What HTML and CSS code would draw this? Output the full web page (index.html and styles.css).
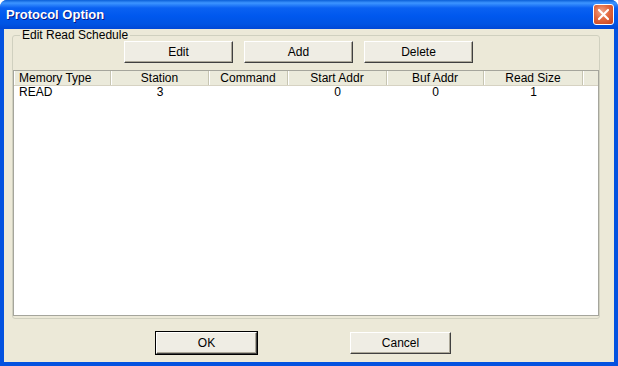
FILE: index.html
```html
<!DOCTYPE html>
<html lang="en">
<head>
  <meta charset="UTF-8" />
  <title>Protocol Option</title>
  <link rel="stylesheet" href="styles.css">
</head>
<body>

  <div class="window">
    <div class="titlebar">
      <span class="title">Protocol Option</span>
      <button class="close" title="Close">
        <svg width="13" height="13" viewBox="0 0 13 13">
          <path d="M2 2 L11 11 M11 2 L2 11" stroke="#fff" stroke-width="2.2" stroke-linecap="round" />
        </svg>
      </button>
    </div>

    <div class="client">
      <fieldset class="group">
        <legend>Edit Read Schedule</legend>
        <div class="toolbar">
          <button class="btn">Edit</button>
          <button class="btn">Add</button>
          <button class="btn">Delete</button>
        </div>

        <div class="list">
          <div class="list-head">
            <div class="col left">Memory Type</div>
            <div class="col">Station</div>
            <div class="col">Command</div>
            <div class="col">Start Addr</div>
            <div class="col">Buf Addr</div>
            <div class="col">Read Size</div>
            <div class="col filler"></div>
          </div>
          <div class="list-row">
            <div class="cell left">READ</div>
            <div class="cell">3</div>
            <div class="cell"></div>
            <div class="cell">0</div>
            <div class="cell">0</div>
            <div class="cell">1</div>
            <div class="cell"></div>
          </div>
        </div>
      </fieldset>

      <div class="footer">
        <button class="btn wide default">OK</button>
        <button class="btn wide">Cancel</button>
      </div>
    </div>
  </div>

</body>
</html>
```

FILE: styles.css
```css
* {
  box-sizing: border-box;
}

body {
  margin: 0;
  padding: 0;
  background-color: #fff;
  font-family: 'Liberation Sans', Arial, sans-serif;
  font-size: 12px;
  color: #000;
}

.window {
  width: 618px;
  height: 366px;
  display: flex;
  flex-direction: column;
  background-color: #0352e0;
  border-radius: 7px 7px 0 0;
  overflow: hidden;
}

.titlebar {
  height: 29px;
  display: flex;
  align-items: center;
  justify-content: space-between;
  padding: 0 4px 0 6px;
  background: linear-gradient(#0a5fd8 0, #3d95ff 3px, #0a61f2 8px, #0058ee 16px, #0054e3 24px, #0047d6 29px);
}

.title {
  color: #fff;
  font-weight: bold;
  font-size: 13px;
  text-shadow: 1px 1px #0a1883;
}

.close {
  width: 21px;
  height: 21px;
  padding: 0;
  display: flex;
  align-items: center;
  justify-content: center;
  border: 1px solid #fff;
  border-radius: 3px;
  background: radial-gradient(circle at 40% 35%, #f0a68c 0, #e2683f 45%, #c5401b 100%);
}

.client {
  flex: 1;
  margin: 0 4px 4px 4px;
  background-color: #ece9d8;
  display: flex;
  flex-direction: column;
}

.group {
  margin: 0 14px 0 8px;
  padding: 0 0 2px 0;
  border: 1px solid #d0d0bf;
  border-radius: 3px;
}

.group legend {
  margin-left: 7px;
  padding: 0 2px;
  line-height: 12px;
}

.toolbar {
  display: flex;
  gap: 11px;
  padding-left: 111px;
}

.btn {
  width: 109px;
  height: 22px;
  padding: 0;
  font-family: 'Liberation Sans', Arial, sans-serif;
  font-size: 12px;
  color: #000;
  background-color: #efede4;
  border: 1px solid;
  border-color: #fff #404040 #404040 #fff;
  box-shadow: inset -1px -1px #aca899;
}

.btn.wide {
  width: 101px;
}

.btn.default {
  outline: 1px solid #000;
}

.list {
  margin-top: 7px;
  height: 246px;
  background-color: #fff;
  border: 1px solid #a5a59c;
}

.list-head,
.list-row {
  display: grid;
  grid-template-columns: 97px 98px 79px 99px 97px 99px 1fr;
}

.list-head {
  height: 15px;
  line-height: 14px;
  background-color: #ebeadb;
  border-bottom: 1px solid #d6d2c2;
}

.col {
  text-align: center;
  border-right: 1px solid #c7c5b2;
  box-shadow: inset 1px 0 #fff;
  white-space: nowrap;
}

.col.filler {
  border-right: none;
}

.list-row {
  height: 13px;
  line-height: 13px;
}

.cell {
  text-align: center;
}

.left {
  text-align: left;
  padding-left: 5px;
}

.footer {
  display: flex;
  gap: 93px;
  margin-top: 13px;
  padding-left: 152px;
}
```
